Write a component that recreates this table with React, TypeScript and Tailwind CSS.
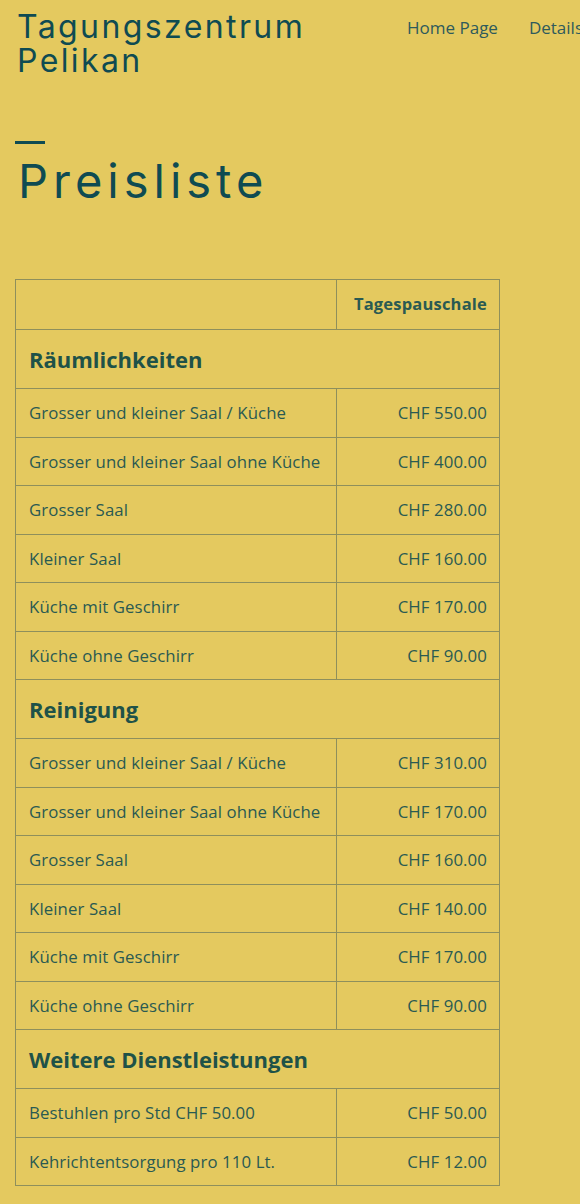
import React from "react";

type Row = { label: string; price: string };
type Section = { title: string; rows: Row[] };

const sections: Section[] = [
  {
    title: "Räumlichkeiten",
    rows: [
      { label: "Grosser und kleiner Saal / Küche", price: "CHF 550.00" },
      { label: "Grosser und kleiner Saal ohne Küche", price: "CHF 400.00" },
      { label: "Grosser Saal", price: "CHF 280.00" },
      { label: "Kleiner Saal", price: "CHF 160.00" },
      { label: "Küche mit Geschirr", price: "CHF 170.00" },
      { label: "Küche ohne Geschirr", price: "CHF 90.00" },
    ],
  },
  {
    title: "Reinigung",
    rows: [
      { label: "Grosser und kleiner Saal / Küche", price: "CHF 310.00" },
      { label: "Grosser und kleiner Saal ohne Küche", price: "CHF 170.00" },
      { label: "Grosser Saal", price: "CHF 160.00" },
      { label: "Kleiner Saal", price: "CHF 140.00" },
      { label: "Küche mit Geschirr", price: "CHF 170.00" },
      { label: "Küche ohne Geschirr", price: "CHF 90.00" },
    ],
  },
  {
    title: "Weitere Dienstleistungen",
    rows: [
      { label: "Bestuhlen pro Std CHF 50.00", price: "CHF 50.00" },
      { label: "Kehrichtentsorgung pro 110 Lt.", price: "CHF 12.00" },
    ],
  },
];

export default function App() {
  return (
    <div
      className="min-h-[1204px] w-[580px] overflow-hidden bg-[#e4c95f] text-[#2a5a52]"
      style={{ fontFamily: "'Open Sans', Lato, sans-serif" }}
    >
      <header className="flex items-start pl-[17px] pt-[10px]">
        <div
          className="w-[390px] shrink-0 text-[32px] leading-[34px] tracking-[2.4px] text-[#0f4b52]"
          style={{ fontFamily: "Inter, 'Noto Sans', sans-serif" }}
        >
          Tagungszentrum
          <br />
          Pelikan
        </div>
        <nav className="flex shrink-0 gap-[31px] whitespace-nowrap pt-[5px] text-[17px] text-[#2e5a5c]">
          <span>Home Page</span>
          <span>Details</span>
        </nav>
      </header>

      <div className="pl-[15px] pt-[63px]">
        <div className="h-[3px] w-[30px] bg-[#0f4b52]" />
        <h1
          className="mt-[9px] pl-[3px] text-[47px] leading-[56px] tracking-[5px] text-[#0f4b52]"
          style={{ fontFamily: "Inter, 'Noto Sans', sans-serif" }}
        >
          Preisliste
        </h1>
      </div>

      <div className="pl-[15px] pt-[70px] pb-[18px]">
        <table className="w-[485px] table-fixed border-collapse border border-[#8e8f5c] text-[16.8px] tracking-[0.1px]">
          <colgroup>
            <col className="w-[321px]" />
            <col />
          </colgroup>
          <thead>
            <tr className="h-[50px]">
              <th className="border border-[#8e8f5c]" />
              <th className="border border-[#8e8f5c] px-[12px] text-right text-[16.5px] font-bold tracking-[0.2px]">
                Tagespauschale
              </th>
            </tr>
          </thead>
          <tbody>
            {sections.map((s) => (
              <React.Fragment key={s.title}>
                <tr className="h-[59px]">
                  <td
                    colSpan={2}
                    className="border border-[#8e8f5c] px-[13px] text-[22px] font-bold tracking-normal text-[#1f5248]"
                  >
                    {s.title}
                  </td>
                </tr>
                {s.rows.map((r, i) => (
                  <tr key={i} className="h-[48.5px]">
                    <td className="whitespace-nowrap border border-[#8e8f5c] pl-[13px] pr-[4px]">{r.label}</td>
                    <td className="whitespace-nowrap border border-[#8e8f5c] px-[12px] text-right">{r.price}</td>
                  </tr>
                ))}
              </React.Fragment>
            ))}
          </tbody>
        </table>
      </div>
    </div>
  );
}
